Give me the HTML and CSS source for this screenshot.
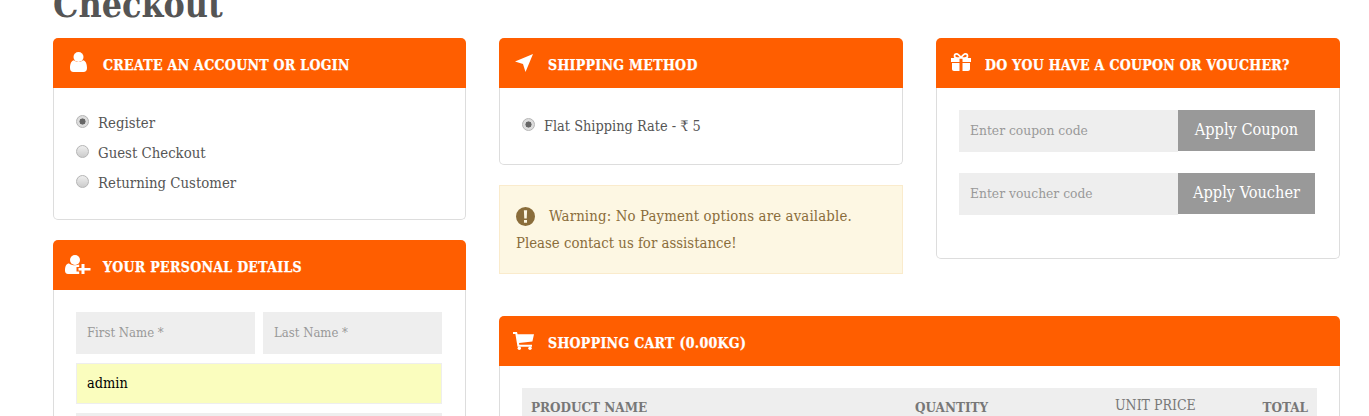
FILE: index.html
```html
<!DOCTYPE html>
<html lang="en">
<head>
<meta charset="utf-8">
<title>Checkout</title>
<link rel="stylesheet" href="styles.css">
</head>
<body>
<h1 class="title">Checkout</h1>
<div class="columns">
  <div class="col-left">
    <section class="card card-account">
      <header class="card-head">
        <span class="icon-slot"><svg class="icon i-user" viewBox="0 0 17 20"><circle cx="8.500" cy="5" r="5"/><path d="M0 16c0-4.500 1.500-7.500 4-7.800C5.300 9.300 6.800 10 8.500 10s3.200-.7 4.500-1.800c2.500.3 4 3.300 4 7.800 0 2.500-1.300 4-3.500 4h-10C1.300 20 0 18.500 0 16z"/></svg></span>
        <h2>Create an account or login</h2>
      </header>
      <div class="card-body radios">
        <label class="radio"><input type="radio" name="acct" checked><span>Register</span></label>
        <label class="radio"><input type="radio" name="acct"><span>Guest Checkout</span></label>
        <label class="radio"><input type="radio" name="acct"><span>Returning Customer</span></label>
      </div>
    </section>
    <section class="card">
      <header class="card-head">
        <span class="icon-slot"><svg class="icon i-plus" viewBox="0 0 26 19"><circle cx="10" cy="5" r="5"/><path d="M0 15.500C0 11 1.500 8.500 4 8.500c1.500 1.200 3.500 1.800 6 1.800 1.600 0 3-.3 4.200-.8V12h-2.700v4.500h2.700V19H3c-2 0-3-1.300-3-3.500z"/><path d="M16.500 9h3v4h6v2.500h-6V19h-3v-3.500h-3V13h3z"/></svg></span>
        <h2>Your personal details</h2>
      </header>
      <div class="card-body form">
        <div class="field-row">
          <input class="field" type="text" placeholder="First Name *">
          <input class="field" type="text" placeholder="Last Name *">
        </div>
        <input class="field field-filled" type="text" value="admin">
        <input class="field" type="text">
      </div>
    </section>
  </div>
  <div class="col-main">
    <div class="main-top">
      <div class="stack">
        <section class="card">
          <header class="card-head">
            <span class="icon-slot"><svg class="icon i-arrow" viewBox="0 0 18 18"><path d="M18 0 10.500 18 8 10 0 7.500z"/></svg></span>
            <h2>Shipping method</h2>
          </header>
          <div class="card-body radios shipping">
            <label class="radio"><input type="radio" name="ship" checked><span>Flat Shipping Rate - ₹ 5</span></label>
          </div>
        </section>
        <div class="alert">
          <p class="alert-first"><svg class="alert-icon" viewBox="0 0 20 20"><path fill-rule="evenodd" d="M10 0a10 10 0 1 0 0 20 10 10 0 0 0 0-20zM8.300 3.500h3.400l-.4 8.500H8.700zM8.400 13.600h3.200v3H8.400z"/></svg>Warning: No Payment options are available.</p>
          <p>Please contact us for assistance!</p>
        </div>
      </div>
      <section class="card card-coupon">
        <header class="card-head">
          <span class="icon-slot"><svg class="icon i-gift" viewBox="0 0 20 18"><path d="M0 5h8.500v4H0zM11.500 5H20v4h-8.500zM1 10h7.500v8H3c-1.200 0-2-.8-2-2zM11.500 10H19v6c0 1.200-.8 2-2 2h-5.500z"/><path fill="none" stroke="#fff" stroke-width="1.700" d="M10 5C8 1.500 6.500.9 5.500.9 4 .9 3.500 2 3.500 3c0 1.300 1 2 2.500 2zM10 5C12 1.500 13.500.9 14.500.9 16 .9 16.500 2 16.500 3c0 1.300-1 2-2.500 2z"/></svg></span>
          <h2>Do you have a coupon or voucher?</h2>
        </header>
        <div class="card-body coupons">
          <div class="apply">
            <input class="field" type="text" placeholder="Enter coupon code">
            <button class="btn" type="button">Apply Coupon</button>
          </div>
          <div class="apply">
            <input class="field" type="text" placeholder="Enter voucher code">
            <button class="btn" type="button">Apply Voucher</button>
          </div>
        </div>
      </section>
    </div>
    <section class="card">
      <header class="card-head">
        <span class="icon-slot"><svg class="icon i-cart" viewBox="0 0 21 18"><path d="M0 0h4l.6 2.200H21L19.400 9.500 6 11l.3 1.800H19v2H4.500L2.400 2H0z"/><circle cx="6.300" cy="16.300" r="1.700"/><circle cx="17" cy="16.300" r="1.700"/></svg></span>
        <h2>Shopping cart (0.00kg)</h2>
      </header>
      <div class="card-body cart">
        <table class="cart-table">
          <thead>
            <tr>
              <th class="c-name">Product Name</th>
              <th class="c-qty">Quantity</th>
              <th class="c-price">Unit Price</th>
              <th class="c-total">Total</th>
            </tr>
          </thead>
        </table>
      </div>
    </section>
  </div>
</div>
</body>
</html>
```
FILE: styles.css
```css
* { box-sizing: border-box; }
html, body { height: 416px; overflow: hidden; }
body {
  margin: 0;
  background: #fff;
  color: #555;
  font-family: "DejaVu Serif Condensed", "DejaVu Serif", serif;
  font-size: 14.8px;
}
.title {
  margin: -28px 0 0 53px;
  height: 66px;
  font-size: 35.500px;
  line-height: 66px;
  font-weight: bold;
  color: #555;
}
.columns { display: flex; gap: 33px; padding-left: 53px; }
.col-left { width: 413px; display: flex; flex-direction: column; gap: 20px; }
.col-left .icon-slot { width: 50px; }
.col-main { width: 841px; display: flex; flex-direction: column; gap: 42px; }
.main-top { display: flex; gap: 33px; align-items: flex-start; }
.stack { width: 404px; display: flex; flex-direction: column; gap: 20px; }
.card-coupon { width: 404px; }
.card { border-radius: 5px; }
.card-head {
  height: 50px;
  background: #ff5e00;
  border-radius: 5px 5px 0 0;
  color: #fff;
  display: flex;
  align-items: center;
}
.card-head h2 {
  margin: 4px 0 0;
  font-size: 14px;
  font-weight: bold;
  text-transform: uppercase;
  letter-spacing: .3px;
  -webkit-text-stroke: .25px #fff;
}
.icon-slot { width: 49px; flex: none; display: flex; justify-content: center; align-items: center; }
.icon { display: block; fill: #fff; margin-bottom: 1px; }
.i-user { width: 17px; height: 20px; margin-bottom: 2px; }
.i-plus { width: 26px; height: 19px; }
.i-arrow { width: 18px; height: 18px; }
.i-gift { width: 20px; height: 18px; margin-bottom: 2px; }
.i-cart { width: 21px; height: 18px; }
.card-body {
  border: 1px solid #ddd;
  border-top: 0;
  border-radius: 0 0 5px 5px;
  padding: 0 23px 0 22px;
}
.radios { padding-top: 20px; padding-bottom: 21px; display: flex; flex-direction: column; }
.radio { display: flex; align-items: center; height: 30px; gap: 9px; }
.radio span { margin-bottom: 2px; }
.radio input {
  appearance: none;
  margin: -4px 0 0;
  width: 13px;
  height: 13px;
  border-radius: 50%;
  border: 1px solid #b5b5b5;
  background: linear-gradient(#eee, #ccc);
  flex: none;
}
.radio input:checked { background: radial-gradient(circle, #666 0 2.800px, #ddd 3.300px); }
.shipping { padding-top: 23px; padding-bottom: 23px; font-size: 14.400px; }
.shipping .radio span { margin-bottom: 0; }
.form { padding-top: 22px; padding-bottom: 20px; display: flex; flex-direction: column; gap: 9px; }
.field-row { display: flex; gap: 8px; }
.field {
  display: block;
  width: 100%;
  min-width: 0;
  height: 42px;
  padding: 0 11px 2px;
  border: 0;
  background: #eee;
  color: #000;
  font: 13px "DejaVu Serif Condensed", "DejaVu Serif", serif;
}
.field::placeholder { color: #999; opacity: 1; }
.field-filled { background: #fafdbe; border: 1px solid #eee; height: 41px; padding: 0 10px 2px; font-size: 14.400px; }
.coupons { padding-top: 22px; padding-bottom: 43px; padding-right: 24px; display: flex; flex-direction: column; gap: 21px; }
.apply { display: flex; align-items: flex-start; }
.apply .field { flex: 1; font-size: 13.700px; }
.btn {
  width: 137px;
  flex: none;
  height: 41px;
  border: 0;
  background: #999;
  color: #fff;
  font: 16.200px "DejaVu Serif Condensed", "DejaVu Serif", serif;
  padding: 0 0 2px;
}
.alert {
  height: 89px;
  padding: 16px 16px 0;
  background: #fdf7e3;
  border: 1px solid #faebcc;
  color: #8a6d3b;
  line-height: 27px;
  font-size: 14.800px;
}
.alert p { margin: 0; }
.alert .alert-first { letter-spacing: .15px; }
.alert-icon { width: 19px; height: 19px; fill: #8a6d3b; vertical-align: -5px; margin-right: 14px; }
.cart { padding: 22px 22px 20px; }
.cart-table { width: 100%; border-collapse: collapse; background: #eee; }
.cart-table th { text-transform: uppercase; font-size: 13.400px; color: #777; height: 38px; padding: 11px 9px 0; text-align: left; vertical-align: top; }
.c-name { width: 384px; }
.c-qty { width: 200px; }
.cart-table .c-price { font-weight: normal; font-size: 14px; padding-top: 9px; }
.cart-table .c-total { text-align: right; }
```
